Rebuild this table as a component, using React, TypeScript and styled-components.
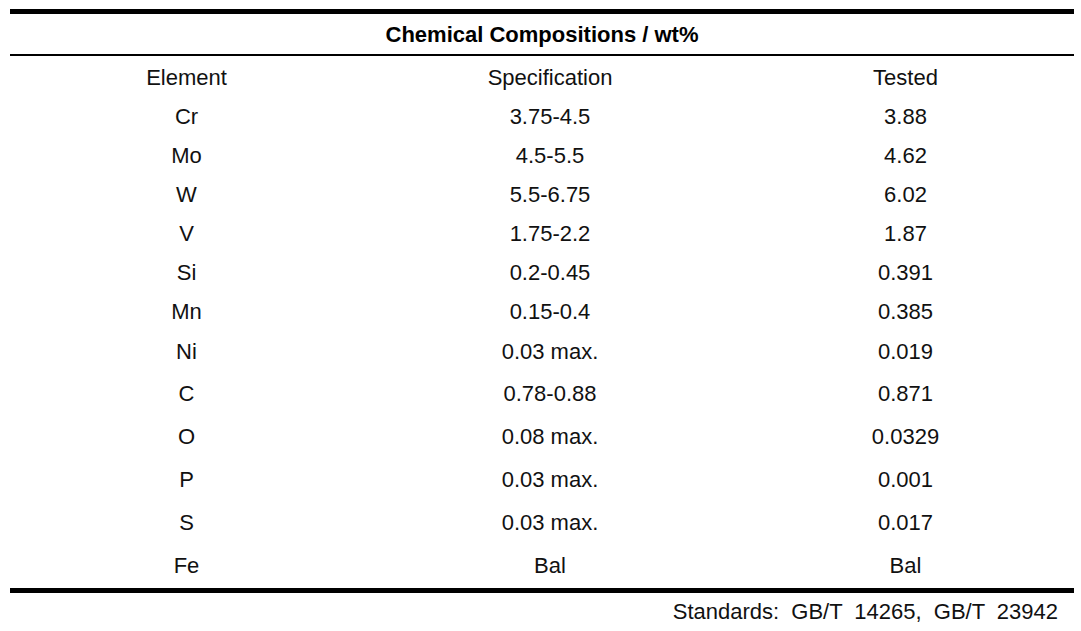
import React from 'react';
import styled, { createGlobalStyle } from 'styled-components';

const GlobalStyle = createGlobalStyle`
  html, body {
    margin: 0;
    padding: 0;
    background: #ffffff;
  }
  body {
    font-family: 'Liberation Sans', Arial, sans-serif;
    color: #000000;
  }
`;

type Row = { element: string; spec: string; tested: string; height: number };

const rows: Row[] = [
  { element: 'Cr', spec: '3.75-4.5', tested: '3.88', height: 39 },
  { element: 'Mo', spec: '4.5-5.5', tested: '4.62', height: 39 },
  { element: 'W', spec: '5.5-6.75', tested: '6.02', height: 39 },
  { element: 'V', spec: '1.75-2.2', tested: '1.87', height: 39 },
  { element: 'Si', spec: '0.2-0.45', tested: '0.391', height: 39 },
  { element: 'Mn', spec: '0.15-0.4', tested: '0.385', height: 39 },
  { element: 'Ni', spec: '0.03 max.', tested: '0.019', height: 41 },
  { element: 'C', spec: '0.78-0.88', tested: '0.871', height: 43 },
  { element: 'O', spec: '0.08 max.', tested: '0.0329', height: 43 },
  { element: 'P', spec: '0.03 max.', tested: '0.001', height: 43 },
  { element: 'S', spec: '0.03 max.', tested: '0.017', height: 43 },
  { element: 'Fe', spec: 'Bal', tested: 'Bal', height: 43 },
];

const App = () => {
  return (
    <>
      <GlobalStyle />
      <Page>
        <Table>
          <Title>Chemical Compositions / wt%</Title>
          <Body>
            <TableRow $height={39}>
              <Cell>Element</Cell>
              <Cell>Specification</Cell>
              <Cell>Tested</Cell>
            </TableRow>
            {rows.map((r) => (
              <TableRow key={r.element} $height={r.height}>
                <Cell>{r.element}</Cell>
                <Cell>{r.spec}</Cell>
                <Cell>{r.tested}</Cell>
              </TableRow>
            ))}
          </Body>
        </Table>
        <Footer>Standards: GB/T 14265, GB/T 23942</Footer>
      </Page>
    </>
  );
};

export default App;

const Page = styled.div`
  padding: 9px 7px 0 10px;
  width: 1064px;
  display: flex;
  flex-direction: column;
`;

const Table = styled.div`
  border-top: 5px solid #000000;
  border-bottom: 5px solid #000000;
  display: flex;
  flex-direction: column;
`;

const Title = styled.div`
  height: 38px;
  padding-top: 2px;
  line-height: 38px;
  text-align: center;
  font-size: 22px;
  font-weight: 700;
  border-bottom: 2px solid #000000;
`;

const Body = styled.div`
  padding: 2px 0 1px;
  display: flex;
  flex-direction: column;
`;

const TableRow = styled.div<{ $height: number }>`
  display: grid;
  grid-template-columns: 353px 374px 337px;
  height: ${(p) => p.$height}px;
  align-items: center;
`;

const Cell = styled.div`
  text-align: center;
  font-size: 22px;
  line-height: 26px;
  color: #111111;
`;

const Footer = styled.div`
  align-self: flex-end;
  padding-right: 16px;
  height: 38px;
  line-height: 38px;
  font-size: 22px;
  color: #111111;
  word-spacing: 6px;
`;
